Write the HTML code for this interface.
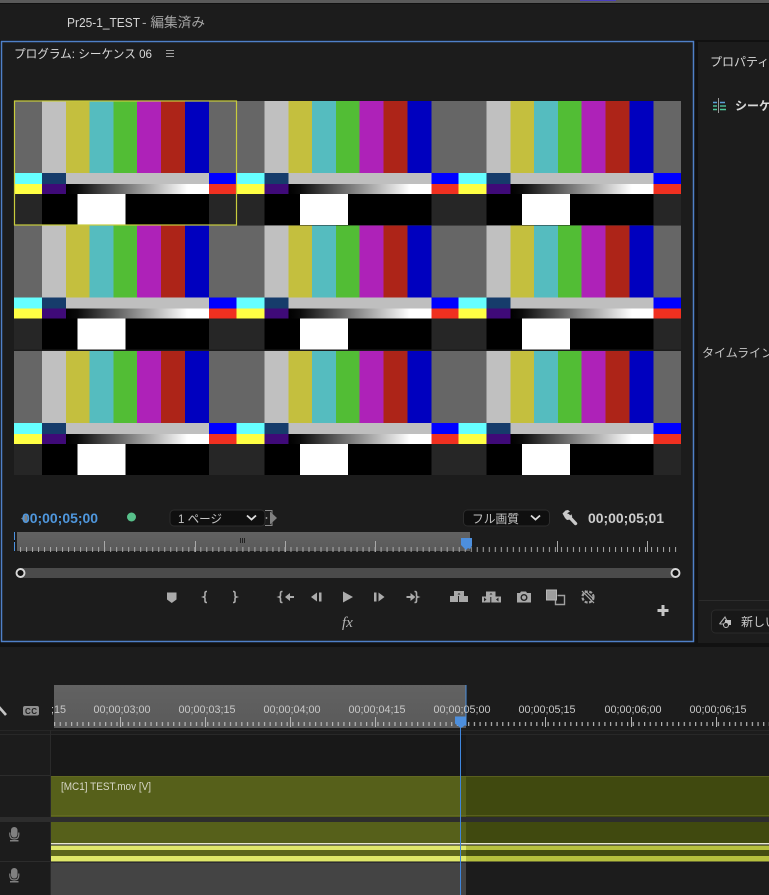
<!DOCTYPE html>
<html lang="ja"><head><meta charset="utf-8"><title>Pr25-1_TEST</title>
<style>
html,body{margin:0;padding:0;background:#111;width:769px;height:895px;overflow:hidden}
svg{display:block}
text{font-family:"Liberation Sans","Noto Sans CJK JP",sans-serif}
</style></head><body>
<svg width="769" height="895" viewBox="0 0 769 895" xmlns="http://www.w3.org/2000/svg">
<defs>
<linearGradient id="g" x1="0" x2="1" y1="0" y2="0"><stop offset="0" stop-color="#000"/><stop offset=".08" stop-color="#0a0a0a"/><stop offset=".85" stop-color="#fff"/><stop offset="1" stop-color="#fff"/></linearGradient>
<linearGradient id="r" x1="0" x2="0" y1="0" y2="1"><stop offset="0" stop-color="#626262"/><stop offset="1" stop-color="#5a5a5a"/></linearGradient>
<symbol id="t" width="223" height="125" viewBox="0 0 223 125" overflow="visible">
<rect x="0" y="0" width="28" height="72" fill="#666"/>
<rect x="28" y="0" width="24" height="72" fill="#c0c0c0"/>
<rect x="52" y="0" width="23.5" height="72" fill="#c4bf3e"/>
<rect x="75.5" y="0" width="24" height="72" fill="#55bcbf"/>
<rect x="99.5" y="0" width="23.5" height="72" fill="#52bd35"/>
<rect x="123" y="0" width="24" height="72" fill="#ae22b8"/>
<rect x="147" y="0" width="24" height="72" fill="#ad2418"/>
<rect x="171" y="0" width="24" height="72" fill="#0000bf"/>
<rect x="195" y="0" width="27.500" height="72" fill="#666"/>
<rect x="0" y="72" width="28" height="11" fill="#6ff"/>
<rect x="28" y="72" width="24" height="11" fill="#163c6b"/>
<rect x="52" y="72" width="143" height="11" fill="#bfbfbf"/>
<rect x="195" y="72" width="27.500" height="11" fill="#00f"/>
<rect x="0" y="83" width="28" height="10" fill="#ff4"/>
<rect x="28" y="83" width="24" height="10" fill="#3f0a78"/>
<rect x="52" y="83" width="143" height="10" fill="url(#g)"/>
<rect x="195" y="83" width="27.500" height="10" fill="#f03020"/>
<rect x="0" y="93" width="28" height="31" fill="#262626"/>
<rect x="28" y="93" width="167" height="31" fill="#000"/>
<rect x="63.500" y="93" width="48" height="31" fill="#fff"/>
<rect x="195" y="93" width="27.500" height="31" fill="#262626"/>
</symbol>
<pattern id="m1" width="6.01" height="10" patternUnits="userSpaceOnUse" x="20" y="547"><rect x="0" y="0" width="1" height="5" fill="#a8a8a8"/></pattern>
<pattern id="t1" width="5.673" height="10" patternUnits="userSpaceOnUse" x="54" y="720"><rect x="0" y="0" width="1.200" height="6" fill="#b4b4b4"/></pattern>
</defs>

<!-- top -->
<rect width="769" height="895" fill="#111"/>
<rect y="0" width="769" height="3" fill="#5a5a5a"/>
<rect x="580" y="0" width="36" height="1" fill="#4a3fc0"/>
<rect y="4" width="769" height="36" fill="#1c1c1c"/>
<text x="67" y="27" font-size="13" fill="#d6d6d6" textLength="73" lengthAdjust="spacingAndGlyphs">Pr25-1_TEST</text>
<text x="142" y="27" font-size="13.500" fill="#a4a4a4" textLength="63" lengthAdjust="spacingAndGlyphs">- 編集済み</text>

<!-- program panel -->
<rect x="1.500" y="41.500" width="692" height="600" fill="#1c1c1c" stroke="#4f80c8" stroke-width="1.500"/>
<text x="14" y="58" font-size="12" fill="#dadada" textLength="138" lengthAdjust="spacingAndGlyphs">プログラム: シーケンス 06</text>
<path d="M166 50.500h8M166 53.500h8M166 56.500h8" stroke="#a0a0a0" stroke-width="1.100"/>

<!-- bars -->
<use href="#t" x="14" y="101"/><use href="#t" x="236.500" y="101"/><use href="#t" x="458.500" y="101"/>
<use href="#t" x="14" y="225.500"/><use href="#t" x="236.500" y="225.500"/><use href="#t" x="458.500" y="225.500"/>
<use href="#t" x="14" y="351"/><use href="#t" x="236.500" y="351"/><use href="#t" x="458.500" y="351"/>
<rect x="14.500" y="101" width="222" height="124" fill="none" stroke="#c8cc3c" stroke-width="1.200"/>

<!-- monitor controls -->
<path d="M27 514v9l-6-4.500z" fill="#808080"/>
<text x="22" y="523" font-size="14" font-weight="bold" fill="#4f97dd" textLength="76" lengthAdjust="spacingAndGlyphs">00;00;05;00</text>
<circle cx="131.500" cy="517" r="4.500" fill="#57c08a"/>
<path d="M265 510.500h7v15h-7" fill="none" stroke="#8a8a8a" stroke-width="1"/>
<circle cx="266.500" cy="518" r=".9" fill="#aaa"/>
<path d="M270 511.500l7 6.500-7 6.500z" fill="#808080"/>
<rect x="170" y="510" width="95" height="16" rx="4" fill="#0f0f0f" stroke="#2c2c2c"/>
<text x="178" y="523" font-size="12" fill="#c4c4c4" textLength="44" lengthAdjust="spacingAndGlyphs">1 ページ</text>
<path d="M247 515.500l4.500 4 4.500-4" fill="none" stroke="#ddd" stroke-width="1.800"/>
<rect x="463.500" y="510" width="86" height="16" rx="4" fill="#0f0f0f" stroke="#2c2c2c"/>
<text x="472" y="523" font-size="12" fill="#c4c4c4" textLength="47" lengthAdjust="spacingAndGlyphs">フル画質</text>
<path d="M531 515.500l4.500 4 4.500-4" fill="none" stroke="#ddd" stroke-width="1.800"/>
<path d="M568 515.500l7.500 8" stroke="#c9c9c9" stroke-width="3.400" stroke-linecap="round"/>
<path d="M562.500 513.500l3-3 2.500-.5 2 1.500-2.500 1.500v2l2 1 2-1.800.7 2.500-1.700 2.800-3.500.5-2-2z" fill="#c9c9c9"/>
<text x="588" y="523" font-size="13.500" font-weight="bold" fill="#cdcdcd" textLength="76" lengthAdjust="spacingAndGlyphs">00;00;05;01</text>

<!-- monitor ruler -->
<rect x="17" y="532" width="453" height="19" fill="url(#r)"/>
<rect x="14" y="532" width="1" height="19" fill="#4a90e0"/>
<rect x="14" y="540" width="1" height="2" fill="#111"/>
<rect x="20" y="547" width="658" height="5" fill="url(#m1)"/>
<path d="M104.500 541v11M195.500 541v11M285.500 541v11M375.500 541v11M557.500 541v11M647.500 541v11" stroke="#a8a8a8"/>
<path d="M240.500 538v5M242.500 538v5M244.500 538v5" stroke="#222"/>
<path d="M461 538h11v8l-2 3-2-1-2 2-2-2-3-3z" fill="#4d8fdd"/>

<!-- slider -->
<rect x="20" y="568" width="655" height="10" fill="#4b4b4b"/>
<circle cx="20.500" cy="573" r="4" fill="#111" stroke="#d8d8d8" stroke-width="1.900"/>
<circle cx="675.500" cy="573" r="4" fill="#111" stroke="#d8d8d8" stroke-width="1.900"/>

<!-- transport -->
<g fill="#ababab" stroke="none">
<path d="M167 592.500h9.500v7l-4.750 3.500-4.750-3.500z"/>
<path d="M285 597l5-4v3h4v2h-4v3z"/>
<path d="M311 597l6-4.500v9z"/><rect x="319" y="592.500" width="2.500" height="9"/>
<path d="M343 591.500l10 5.500-10 5.500z"/>
<rect x="374" y="592.500" width="2.500" height="9"/><path d="M378.500 592.500l6 4.500-6 4.500z"/>
<path d="M411.500 597l-5-4v3h-4v2h4v3z" transform="translate(4 0)"/>
</g>
<g fill="none" stroke="#ababab" stroke-width="1.600">
<path d="M207 591.500h-.5q-1.500 0-1.500 1.500v2.500q0 1-1.500 1.500 1.500.5 1.500 1.500v2.500q0 1.500 1.500 1.500h.5"/>
<path d="M233 591.500h.5q1.500 0 1.500 1.500v2.500q0 1 1.500 1.500-1.500.5-1.500 1.500v2.500q0 1.500-1.500 1.500h-.5"/>
<path d="M282.500 591.500h-.5q-1.500 0-1.500 1.500v2.500q0 1-1.500 1.500 1.500.5 1.500 1.500v2.500q0 1.500 1.500 1.500h.5"/>
<path d="M414.500 591.500h.5q1.500 0 1.500 1.500v2.500q0 1 1.500 1.500-1.500.5-1.500 1.500v2.500q0 1.500-1.500 1.500h-.5"/>
</g>
<text x="342" y="627" font-size="15" font-style="italic" fill="#b5b5b5" style="font-family:'Liberation Serif',serif">fx</text>

<!-- lift / extract -->
<path d="M454 591h10v5h4v6h-18v-6h4z" fill="#a8a8a8"/>
<path d="M457.500 594.500l1.500-1.500 1.500 1.500z" fill="#222"/>
<path d="M458.500 596v6" stroke="#1c1c1c"/>
<path d="M486 591.500h9.500v5h5.500v6h-19v-6h4z" fill="#a8a8a8"/>
<path d="M489.500 594.500l1.500-1.500 1.500 1.500z" fill="#222"/>
<path d="M484 597.500v4l2.500-2zM498.500 597.500v4l-2.500-2z" fill="#222"/>
<path d="M490.800 597v6" stroke="#1c1c1c"/>
<path d="M517 593h3l1-1.500h5l1 1.500h4v9.500h-14z" fill="#a8a8a8"/>
<circle cx="524" cy="597.500" r="2.800" fill="#a8a8a8" stroke="#222" stroke-width="1.400"/>
<rect x="546.500" y="590" width="10" height="10" fill="#9e9e9e" stroke="#b8b8b8"/>
<path d="M557.500 595.500h7v9h-9v-4" fill="none" stroke="#a0a0a0" stroke-width="1.400"/>
<circle cx="588" cy="597" r="5.500" fill="none" stroke="#a0a0a0" stroke-width="2.200" stroke-dasharray="3 1.500"/>
<path d="M582 591l12 12M585 590.500l9 9" stroke="#a8a8a8" stroke-width="1.200"/>
<path d="M663 605v11M657.500 610.500h11" stroke="#c6c6c6" stroke-width="3"/>

<!-- properties panel -->
<rect x="698" y="42" width="71" height="601" fill="#1c1c1c"/>
<text x="710" y="66" font-size="12" fill="#d8d8d8">プロパティ</text>
<path d="M718.500 98v15" stroke="#9a9a9a" stroke-width="1"/>
<path d="M713 102.500h4M720 102.500h5" stroke="#5ba0d8" stroke-width="1.500"/>
<path d="M713 106h4M720 106h6" stroke="#4bb89a" stroke-width="1.500"/>
<path d="M713 109.500h4M720 109.500h6" stroke="#4fc79a" stroke-width="1.500"/>
<text x="735" y="110" font-size="12" font-weight="bold" fill="#d8d8d8">シーケ</text>
<text x="702" y="357" font-size="12" fill="#c4c4c4">タイムライン</text>
<path d="M699 600.500h70" stroke="#2c2c2c"/>
<rect x="711.500" y="610" width="70" height="23" rx="4" fill="#181818" stroke="#2a2a2a"/>
<path d="M719.500 624l5.500-7 2 4M719.500 624h5" fill="none" stroke="#b0b0b0" stroke-width="1.100"/>
<rect x="725" y="620" width="6" height="5" fill="#c0c0c0"/>
<circle cx="726" cy="625" r="2.500" fill="#1a1a1a" stroke="#c0c0c0"/>
<text x="741" y="626" font-size="12" fill="#c8c8c8">新しい</text>

<!-- timeline -->
<rect x="0" y="647" width="769" height="248" fill="#1c1c1c"/>
<rect x="54" y="685" width="412" height="43" fill="url(#r)"/>
<rect x="465.500" y="685" width="1" height="41" fill="#4a90e0"/>
<path d="M-1 707l7 8" stroke="#c4c4c4" stroke-width="2.600"/>
<rect x="23" y="706" width="16" height="9.500" rx="2" fill="#8f8f8f"/>
<text x="25" y="714" font-size="8" font-weight="bold" fill="#222" textLength="12">CC</text>
<g font-size="10.800" fill="#c8c8c8">
<text x="51" y="713">;15</text>
<text x="93.500" y="713" textLength="57" lengthAdjust="spacingAndGlyphs">00;00;03;00</text>
<text x="178.500" y="713" textLength="57" lengthAdjust="spacingAndGlyphs">00;00;03;15</text>
<text x="263.500" y="713" textLength="57" lengthAdjust="spacingAndGlyphs">00;00;04;00</text>
<text x="348.500" y="713" textLength="57" lengthAdjust="spacingAndGlyphs">00;00;04;15</text>
<text x="433.500" y="713" textLength="57" lengthAdjust="spacingAndGlyphs">00;00;05;00</text>
<text x="518.500" y="713" textLength="57" lengthAdjust="spacingAndGlyphs">00;00;05;15</text>
<text x="604.500" y="713" textLength="57" lengthAdjust="spacingAndGlyphs">00;00;06;00</text>
<text x="689.500" y="713" textLength="57" lengthAdjust="spacingAndGlyphs">00;00;06;15</text>
</g>
<rect x="54" y="722" width="715" height="5" fill="url(#t1)"/>
<path d="M120.500 717v10M205.500 717v10M290.500 717v10M375.500 717v10M460.500 717v10M545.500 717v10M631.500 717v10M716.500 717v10" stroke="#b4b4b4"/>

<!-- tracks -->
<path d="M0 730.500h769" stroke="#262626"/>
<path d="M0 734.500h769" stroke="#282828"/>
<rect x="51" y="735" width="415" height="41" fill="#181818"/>
<path d="M50.500 730v165" stroke="#2a2a2a"/>
<path d="M0 775.500h50" stroke="#2c2c2c"/>
<rect x="51" y="776" width="415" height="41" fill="#56601a"/>
<rect x="466" y="776" width="303" height="41" fill="#40490f"/>
<path d="M51 776.500h718M51 815.500h718" stroke="#6a6f28" opacity=".6"/>
<text x="61" y="790" font-size="11" fill="#d8d8c8" textLength="90" lengthAdjust="spacingAndGlyphs">[MC1] TEST.mov [V]</text>
<rect x="0" y="817" width="769" height="5" fill="#2d2d2d"/>
<rect x="51" y="822" width="415" height="21" fill="#56601a"/>
<rect x="466" y="822" width="303" height="21" fill="#40490f"/>
<rect x="51" y="843" width="718" height="1.500" fill="#e8e8d0"/>
<rect x="51" y="844.500" width="718" height="1" fill="#111"/>
<rect x="51" y="845.500" width="415" height="4.500" fill="#e0e86a"/>
<rect x="466" y="845.500" width="303" height="4.500" fill="#b6c03e"/>
<rect x="51" y="850" width="415" height="6" fill="#5d661c"/>
<rect x="466" y="850" width="303" height="6" fill="#444d10"/>
<rect x="51" y="856" width="415" height="5.500" fill="#e0e86a"/>
<rect x="466" y="856" width="303" height="5.500" fill="#b6c03e"/>
<rect x="51" y="861.500" width="718" height="1" fill="#15151f"/>
<rect x="51" y="862.500" width="415" height="33" fill="#444"/>
<path d="M0 861.500h50" stroke="#2c2c2c"/>

<!-- mics -->
<g fill="#808080">
<rect x="11" y="827" width="6.500" height="10.500" rx="3.200"/>
<path d="M9.800 832.500v2q0 4.500 4.500 4.500t4.500-4.500v-2" fill="none" stroke="#808080" stroke-width="1.200"/>
<rect x="10" y="840" width="8.500" height="1.500"/>
<rect x="11" y="868" width="6.500" height="10.500" rx="3.200"/>
<path d="M9.800 873.500v2q0 4.500 4.500 4.500t4.500-4.500v-2" fill="none" stroke="#808080" stroke-width="1.200"/>
<rect x="10" y="881" width="8.500" height="1.500"/>
</g>

<!-- playhead -->
<path d="M455 716.500h11v8l-4 3h-2l-5-4z" fill="#4d8fdd"/>
<path d="M460.500 727v168" stroke="#3f86dc" stroke-width="1"/>
</svg>
</body></html>
